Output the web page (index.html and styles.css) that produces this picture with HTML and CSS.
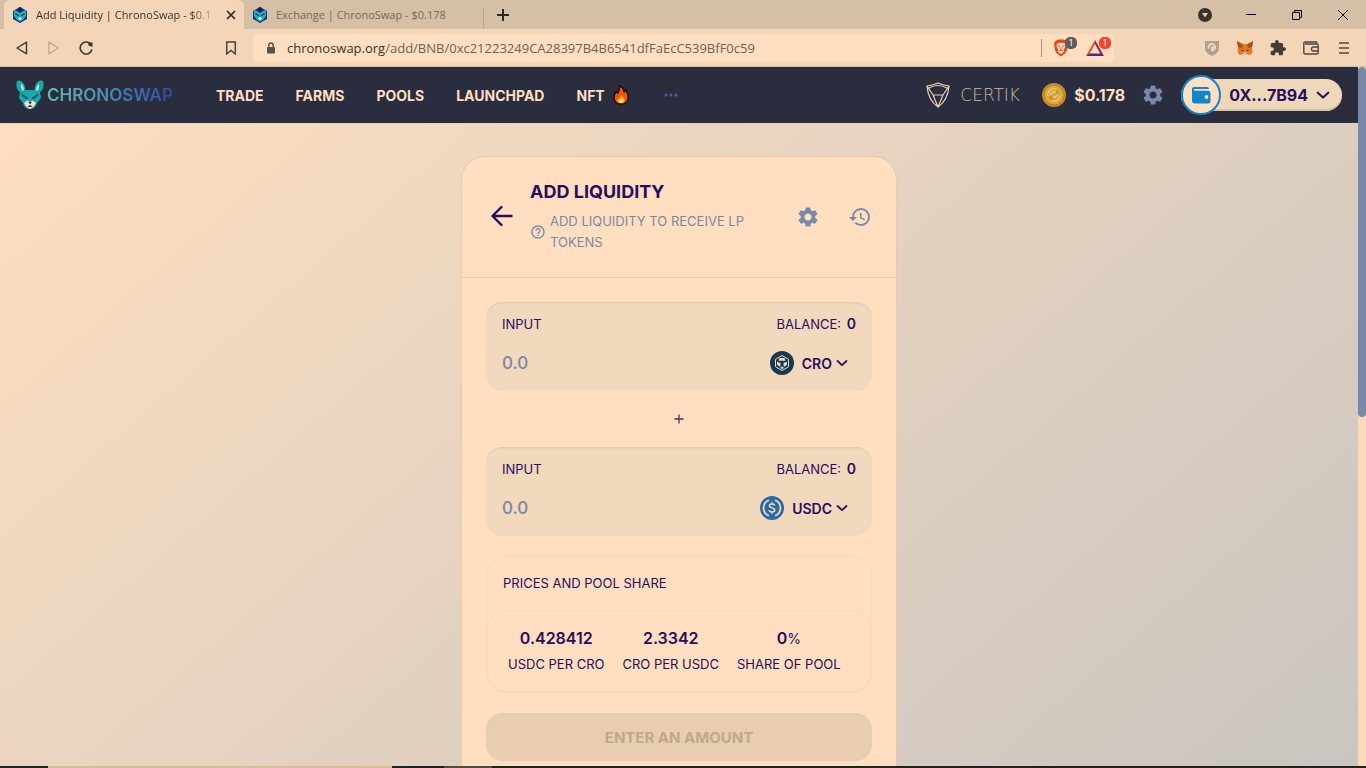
FILE: index.html
```html
<!DOCTYPE html>
<html lang="en">
<head>
<meta charset="utf-8">
<title>Add Liquidity | ChronoSwap</title>
<link rel="stylesheet" href="styles.css">
</head>
<body>
<svg class="defs" aria-hidden="true">
  <symbol id="favicon" viewBox="0 0 16 16">
    <path d="M8 0l7 4v8l-7 4-7-4V4z" fill="#1b2a86"/>
    <path d="M2 3l3 1 3 2 3-2 3-1v6l-3 4-3 1.500-3-1.500-3-4z" fill="#21b3b8"/>
    <circle cx="8" cy="2.500" r="2.300" fill="#12206b"/>
    <path d="M3.500 6.500L7 9M12.500 6.500L9 9" stroke="#123a6b" stroke-width="1.300"/>
    <path d="M6 11.500l2-1.500 2 1.500-2 1.800z" fill="#e9f4ee"/>
  </symbol>
  <symbol id="gear" viewBox="0 0 24 24">
    <path d="M19.14 12.94c.04-.3.06-.61.06-.94 0-.32-.02-.64-.07-.94l2.030-1.580c.18-.14.23-.41.12-.61l-1.920-3.320c-.12-.22-.37-.29-.59-.22l-2.390.96c-.5-.38-1.030-.7-1.620-.94l-.36-2.540c-.04-.24-.24-.41-.48-.41h-3.840c-.24 0-.43.17-.47.41l-.36 2.540c-.59.24-1.130.57-1.620.94l-2.390-.96c-.22-.08-.47 0-.59.22L2.740 8.870c-.12.21-.08.47.12.61l2.030 1.580c-.05.3-.09.63-.09.94s.02.64.07.94l-2.030 1.580c-.18.14-.23.41-.12.61l1.920 3.320c.12.22.37.29.59.22l2.390-.96c.5.38 1.030.7 1.620.94l.36 2.540c.05.24.24.41.48.41h3.840c.24 0 .44-.17.47-.41l.36-2.540c.59-.24 1.130-.56 1.620-.94l2.390.96c.22.08.47 0 .59-.22l1.920-3.320c.12-.22.07-.47-.12-.61l-2.010-1.580zM12 15.600c-1.980 0-3.600-1.620-3.600-3.600s1.620-3.600 3.600-3.600 3.600 1.620 3.600 3.600-1.620 3.600-3.600 3.600z" fill="currentColor"/>
  </symbol>
  <symbol id="chevron" viewBox="0 0 12 12">
    <path d="M1.500 4L6 8.200 10.500 4" fill="none" stroke="currentColor" stroke-width="1.800" stroke-linecap="round" stroke-linejoin="round"/>
  </symbol>
</svg>

<div class="window">
  <div class="tabstrip">
    <div class="tab tab-active">
      <svg class="i16"><use href="#favicon"/></svg>
      <span class="tab-title tab-fade">Add Liquidity | ChronoSwap - $0.1</span>
      <button class="plain" aria-label="Close tab"><svg class="i10" viewBox="0 0 10 10"><path d="M1 1l8 8M9 1L1 9" stroke="#2d2823" stroke-width="1.700"/></svg></button>
    </div>
    <div class="tab tab-idle">
      <svg class="i16"><use href="#favicon"/></svg>
      <span class="tab-title">Exchange | ChronoSwap - $0.178</span>
    </div>
    <button class="plain newtab" aria-label="New tab"><svg class="i12" viewBox="0 0 12 12"><path d="M6 0v12M0 6h12" stroke="#2d2823" stroke-width="2"/></svg></button>
    <div class="winctl">
      <button class="plain" aria-label="Search tabs"><svg class="i14" viewBox="0 0 14 14"><circle cx="7" cy="7" r="7" fill="#3a332c"/><path d="M4 5h6L7 9.500z" fill="#e6cfb4"/></svg></button>
      <button class="plain" aria-label="Minimize"><svg class="i10" viewBox="0 0 10 10"><path d="M0 4.500h10" stroke="#000"/></svg></button>
      <button class="plain" aria-label="Restore"><svg class="i10" viewBox="0 0 10 10"><path d="M.5 2.500h7v7h-7zM2.500 2.500v-2h7v7h-2" fill="none" stroke="#000"/></svg></button>
      <button class="plain" aria-label="Close"><svg class="i10" viewBox="0 0 10 10"><path d="M0 0l10 10M10 0L0 10" stroke="#000"/></svg></button>
    </div>
  </div>

  <div class="toolbar">
    <div class="navbtns">
      <button class="plain" aria-label="Back"><svg class="i14" viewBox="0 0 14 14"><path d="M11.500 1.200v11.600L2 7z" fill="none" stroke="#3f372f" stroke-width="1.400" stroke-linejoin="round"/></svg></button>
      <button class="plain" aria-label="Forward"><svg class="i14" viewBox="0 0 14 14"><path d="M2 1.200v11.600L11.500 7z" fill="none" stroke="#c4a98d" stroke-width="1.400" stroke-linejoin="round"/></svg></button>
      <button class="plain" aria-label="Reload"><svg class="i14" viewBox="0 0 14 14"><path d="M11.500 2.800A6 6 0 1 0 13 8.500" fill="none" stroke="#3f372f" stroke-width="1.600"/><path d="M9 1.500h4.500V6L9.500 4.500z" fill="#3f372f"/></svg></button>
    </div>
    <button class="plain" aria-label="Bookmark"><svg class="i14" viewBox="0 0 14 14"><path d="M2.700 1h8.600v12L7 9.500 2.700 13z" fill="none" stroke="#4b4239" stroke-width="1.500"/></svg></button>
    <div class="address">
      <svg class="lock" viewBox="0 0 10 12"><rect x="1" y="5" width="8" height="6.500" rx="1" fill="#5d5145"/><path d="M2.800 5V3.200a2.200 2.200 0 0 1 4.400 0V5" fill="none" stroke="#5d5145" stroke-width="1.400"/></svg>
      <span class="url"><b>chronoswap.org</b>/add/BNB/0xc21223249CA28397B4B6541dfFaEcC539BfF0c59</span>
      <div class="shields">
        <button class="plain badged" aria-label="Brave Shields"><svg class="i18" viewBox="0 0 18 18"><path d="M3.500 2L6 .5h6L14.500 2l1.500 2-1 7.500-2 3L9 17.500l-4-3-2-3L2 4z" fill="#f0460e"/><path d="M5 4.500l4-.8 4 .8.500 3-2 3.500 1 1.500L9 15l-3.500-2.500 1-1.500-2-3.500z" fill="#ffe6d3"/><path d="M5.500 6.500L8 7.500M12.500 6.500L10 7.500M9 8v3M7 12l2-1 2 1" stroke="#f0460e" fill="none"/></svg><span class="badge">1</span></button>
        <button class="plain badged" aria-label="Rewards"><svg class="i18" viewBox="0 0 18 18"><path d="M9 1L0 17l3.500-2L9 5z" fill="#f0512d"/><path d="M9 1l9 16-3.500-2L9 5z" fill="#8c2157"/><path d="M0 17h18l-3.500-2.500h-11z" fill="#4b2a8a"/></svg><span class="badge badge-red">1</span></button>
      </div>
    </div>
    <div class="extensions">
      <button class="plain" aria-label="Guard"><svg class="i16" viewBox="0 0 16 16"><path d="M1 1h14v7c0 4-3 6-7 8-4-2-7-4-7-8z" fill="#afa08f"/><path d="M4.800 8.500A3.300 3.300 0 1 1 8 10.500V7.500h2" fill="none" stroke="#f3d8bb" stroke-width="1.800"/></svg></button>
      <button class="plain" aria-label="MetaMask"><svg class="i16" viewBox="0 0 16 16"><path d="M0 1l6 3h4l6-3-1 7 .5 4-2 3-4-1H6.500l-4 1-2-3L1 8z" fill="#e8771d"/><path d="M0 1l6 4-1 3-4-1zM16 1l-6 4 1 3 4-1z" fill="#a8501b"/><path d="M3.500 9.500l3 .5-.5 1.500zM12.500 9.500l-3 .5.500 1.500z" fill="#2c3847"/><path d="M6 12h4l-.5 2.500h-3z" fill="#c9b8a5"/></svg></button>
      <button class="plain" aria-label="Extensions"><svg class="i16" viewBox="1 1 22 22"><path d="M20.500 11H19V7c0-1.100-.9-2-2-2h-4V3.500a2.500 2.500 0 0 0-5 0V5H4c-1.100 0-1.990.9-1.990 2v3.800H3.500c1.490 0 2.700 1.210 2.700 2.700s-1.210 2.700-2.700 2.700H2V20c0 1.100.9 2 2 2h3.800v-1.500c0-1.490 1.210-2.700 2.700-2.700s2.700 1.210 2.700 2.700V22H17c1.100 0 2-.9 2-2v-4h1.500a2.500 2.500 0 0 0 0-5z" fill="#453c33"/></svg></button>
      <button class="plain" aria-label="Wallet"><svg class="i16" viewBox="0 0 16 16"><path d="M13.500 4V2H2Q.8 2 .8 3.500V12.500Q.8 14 2.300 14h11.500q1.400 0 1.400-1.400V5.500Q15.200 4 13.700 4H2M15 7h-4.500a2 2 0 0 0 0 4H15" fill="none" stroke="#51463c" stroke-width="1.400"/></svg></button>
      <button class="plain" aria-label="Menu"><svg class="i16" viewBox="0 0 16 16"><path d="M3 3h10M3 8h10M3 13h10" stroke="#51463c" stroke-width="1.600"/></svg></button>
    </div>
  </div>

  <div class="viewport">
    <div class="page">
      <header class="site">
        <a class="brand" href="#">
          <svg class="rabbit" viewBox="0 0 28 30"><path d="M1 1c4-2 8 2 8.500 9h9C19 3 23-1 27 1c1.500 4 0 10-3 11l1 6-4 5c-1 4-4 6-7 6s-6-2-7-6l-4-5 1-6C1 11-.5 5 1 1z" fill="#18a9ad"/><path d="M5 4c2 1 3 3.500 3 6l-1.500 1C5.500 9 4.500 7 5 4zM23 4c-2 1-3 3.500-3 6l1.500 1c1-2 2-4 1.500-7z" fill="#cfe0d2"/><path d="M5 13l7.500 5-2 1.500-4-3zM23 13l-7.500 5 2 1.500 4-3z" fill="#14545f"/><path d="M8 23l3.500-2.500L14 22l2.500-1.500L20 23l-2.500 4-3.500 2-3.500-2z" fill="#ffdfc4"/><path d="M12.500 22h3L14 24zM11.500 27l2.500-2 2.500 2" fill="#22404f" stroke="#22404f" stroke-width=".5"/></svg>
          <span class="wordmark">CHRONOSWAP</span>
        </a>
        <nav class="menu">
          <a href="#">TRADE</a><a href="#">FARMS</a><a href="#">POOLS</a><a href="#">LAUNCHPAD</a>
          <a href="#" class="nft">NFT <svg class="flame" viewBox="0 0 16 20"><path d="M6 1c4 1 5 4 5 6l1.500-2C15 8 15.500 11 15 14c-.5 3-3 5-7 5s-7-2-7-6c0-3 1-4 1.500-6L5 8c1-2 2-4 1-7z" fill="#f4520b" stroke="#160e0c" stroke-width="1.400" stroke-linejoin="round"/><path d="M8 10c2 2 3.500 3.500 3.500 5.300s-1.300 3-3.500 3-3.500-1.300-3.500-3.300l1.500-2 1 1z" fill="#ffb80e"/><path d="M8.500 14l1.500 2.500-2 1.500-2-1.500z" fill="#fff0a0"/></svg></a>
          <a href="#" aria-label="More"><svg class="dots" viewBox="0 0 14 4"><g fill="#4a62ad"><circle cx="2" cy="2" r="1.500"/><circle cx="7" cy="2" r="1.500"/><circle cx="12" cy="2" r="1.500"/></g></svg></a>
        </nav>
        <div class="account">
          <a class="certik" href="#"><svg class="shield" viewBox="0 0 24 26"><path d="M1 4Q8 3 12 1q4 2 11 3-1 14-11 21Q2 18 1 4zM1 4l6 9h10l6-9M7 13l5 12 5-12M3 6Q12 1 21 6" fill="none" stroke="#ead0b7" stroke-width="1.200"/></svg><span>CERTIK</span></a>
          <a class="price" href="#"><svg class="i24" viewBox="0 0 24 24"><circle cx="12" cy="12" r="12" fill="#c98f27"/><circle cx="12" cy="12" r="10" fill="#dba63d" stroke="#a97118" stroke-width=".7"/><path d="M5.500 13a7 7 0 0 1 9-7M18.500 12a7 7 0 0 1-9 6M8 12q2-4 6-3M11 14q3 1 5-3" stroke="#efcc76" stroke-width="1.200" fill="none"/><path d="M14 8l2 1-1 2M9 13l-1 2 3 1" stroke="#ad7a20" fill="none"/></svg>$0.178</a>
          <button class="plain slate" aria-label="Settings"><svg class="i24"><use href="#gear"/></svg></button>
          <button class="wallet"><span class="wallet-icon"><svg class="i24" viewBox="0 0 24 24"><path d="M5 4h13q2 0 2 2H5.500a1 1 0 0 0 0 1.800H19q2.500 0 2.500 2.200v8q0 2.500-2.500 2.500H6q-3 0-3-3V6q0-2 2-2z" fill="#1185c7"/><circle cx="17.500" cy="14" r="1.900" fill="#ffdfc0"/></svg></span><span>0X...7B94</span><svg class="i14"><use href="#chevron"/></svg></button>
        </div>
      </header>

      <main class="content">
        <section class="card">
          <div class="card-head">
            <button class="plain back" aria-label="Go back"><svg class="i24" viewBox="0 0 24 24"><path d="M21.500 11H3M11.500 2L2.500 11l9 9" fill="none" stroke="currentColor" stroke-width="2.400" stroke-linecap="round" stroke-linejoin="round"/></svg></button>
            <div class="heading">
              <h1>ADD LIQUIDITY</h1>
              <div class="sub"><svg class="i16" viewBox="0 0 24 24"><path d="M11 18h2v-2h-2v2zm1-16C6.480 2 2 6.480 2 12s4.480 10 10 10 10-4.480 10-10S17.520 2 12 2zm0 18c-4.410 0-8-3.590-8-8s3.590-8 8-8 8 3.590 8 8-3.590 8-8 8zm0-14c-2.210 0-4 1.790-4 4h2c0-1.100.9-2 2-2s2 .9 2 2c0 2-3 1.750-3 5h2c0-2.250 3-2.500 3-5 0-2.210-1.790-4-4-4z" fill="currentColor"/></svg><p>ADD LIQUIDITY TO RECEIVE LP TOKENS</p></div>
            </div>
            <div class="tools">
              <button class="plain slate" aria-label="Settings"><svg class="i24"><use href="#gear"/></svg></button>
              <button class="plain slate" aria-label="History"><svg class="i24" viewBox="0 0 24 24"><path d="M13 3a9 9 0 0 0-9 9H1l3.890 3.890.07.14L9 12H6c0-3.870 3.130-7 7-7s7 3.130 7 7-3.130 7-7 7c-1.930 0-3.680-.79-4.940-2.060l-1.420 1.420A8.954 8.954 0 0 0 13 21a9 9 0 0 0 0-18zm-1 5v5l4.280 2.540.72-1.210-3.500-2.080V8H12z" fill="currentColor"/></svg></button>
            </div>
          </div>

          <div class="card-body">
            <div class="amount">
              <div class="row"><label for="a0">INPUT</label><span>BALANCE: <b>0</b></span></div>
              <div class="row row-value"><input id="a0" type="text" placeholder="0.0">
                <button class="plain token"><svg class="i24" viewBox="0 0 24 24"><circle cx="12" cy="12" r="12" fill="#163a4f"/><path d="M12 4.500l6.500 3.800v7.400L12 19.500l-6.500-3.800V8.300z" fill="none" stroke="#f3d8bc"/><path d="M9.500 7h5l1 2.700h-7zM7 10.700l3.500 1.300v2.500l-1 1.300L7 13.500zM17 10.700L13.500 12v2.500l1 1.300L17 13.500zM10.500 15.800h3v1.400L12 18l-1.500-.8z" fill="#f3d8bc"/></svg><span>CRO</span><svg class="i12"><use href="#chevron"/></svg></button></div>
            </div>
            <div class="plus"><svg class="i10" viewBox="0 0 10 10"><path d="M5 .5v9M.5 5h9" stroke="#4d2e5c" stroke-width="1.300"/></svg></div>
            <div class="amount">
              <div class="row"><label for="a1">INPUT</label><span>BALANCE: <b>0</b></span></div>
              <div class="row row-value"><input id="a1" type="text" placeholder="0.0">
                <button class="plain token"><svg class="i24" viewBox="0 0 24 24"><circle cx="12" cy="12" r="12" fill="#2b6ba3"/><path d="M9 4.200a8.300 8.300 0 0 0 0 15.600M15 4.200a8.300 8.300 0 0 1 0 15.600" fill="none" stroke="#f3d8bc" stroke-width="1.700"/><path d="M14.700 9.700c-.2-1.200-1.200-1.800-2.700-1.800s-2.600.7-2.600 1.900c0 2.800 5.300 1.300 5.300 4.200 0 1.300-1.100 2-2.700 2s-2.700-.7-2.800-2M12 6.200v1.700M12 16v1.800" fill="none" stroke="#f3d8bc" stroke-width="1.500"/></svg><span>USDC</span><svg class="i12"><use href="#chevron"/></svg></button></div>
            </div>

            <div class="pool">
              <h2>PRICES AND POOL SHARE</h2>
              <div class="stats">
                <div class="stat"><strong>0.428412</strong><span>USDC PER CRO</span></div>
                <div class="stat"><strong>2.3342</strong><span>CRO PER USDC</span></div>
                <div class="stat"><strong>0<small>%</small></strong><span>SHARE OF POOL</span></div>
              </div>
            </div>
            <button class="submit" disabled>ENTER AN AMOUNT</button>
          </div>
        </section>
      </main>
    </div>
    <div class="scrollbar"><div class="thumb"></div></div>
  </div>
  <div class="taskbar"></div>
</div>
</body>
</html>
```
FILE: styles.css
```css
* { box-sizing: border-box; }
body { margin: 0; font-family: Inter, "Liberation Sans", sans-serif; color: #280d5f; }
h1, h2, p { margin: 0; }
a { color: inherit; text-decoration: none; }
button { font-family: inherit; color: inherit; }
svg { display: block; flex: none; }
.defs { position: absolute; width: 0; height: 0; }
.plain { display: flex; align-items: center; padding: 0; border: 0; background: none; }
.i10 { width: 10px; height: 10px; }
.i12 { width: 12px; height: 12px; }
.i14 { width: 14px; height: 14px; }
.i16 { width: 16px; height: 16px; }
.i18 { width: 18px; height: 18px; }
.i24 { width: 24px; height: 24px; }

.window { display: flex; flex-direction: column; height: 100vh; overflow: hidden; }

/* Browser chrome */
.tabstrip { display: flex; flex: none; height: 29px; padding-left: 4px; background: #d6bfa7; font: 11px "Open Sans", "Noto Sans", sans-serif; }
.tab { display: flex; align-items: center; gap: 8px; width: 240px; padding: 0 8px; }
.tab-active { background: #f3d6b8; color: #3a322a; border-radius: 6px 6px 0 0; }
.tab-idle { color: #796958; background: linear-gradient(#bba68f, #bba68f) right 7px / 1px 22px no-repeat; }
.tab-title { flex: 1; white-space: nowrap; }
.tab-fade { -webkit-mask-image: linear-gradient(to right, #000 85%, transparent); mask-image: linear-gradient(to right, #000 85%, transparent); }
.newtab { margin-left: 13px; }
.winctl { display: flex; gap: 36px; margin-left: auto; padding-right: 18px; }
.winctl .plain { justify-content: center; width: 10px; }
.toolbar { display: flex; flex: none; align-items: center; height: 38px; padding: 0 14px; background: #f3d6b8; border-bottom: 1px solid #d9bfa3; }
.navbtns { display: flex; gap: 18px; width: 210px; padding-left: 1px; }
.address { display: flex; flex: 1; align-items: center; height: 28px; margin-left: 15px; padding: 0 2px 0 13px; background: #ffdfc0; border-radius: 4px; font: 13px "Open Sans", "Noto Sans", sans-serif; color: #706152; }
.address b { font-weight: 400; color: #3a322a; }
.lock { width: 10px; height: 12px; margin-right: 11px; }
.url { flex: 1; white-space: nowrap; overflow: hidden; }
.shields { display: flex; gap: 16px; padding-left: 10px; border-left: 1px solid #ab9580; }
.badged { position: relative; width: 18px; }
.shields .badged:last-child { margin-right: 8px; }
.badge { position: absolute; left: 13px; top: -2px; width: 12px; height: 12px; border-radius: 5px; background: #625b5b; color: #fff; font: 9px/12px Roboto, sans-serif; text-align: center; }
.badge-red { background: #f4442b; }
.extensions { display: flex; gap: 17px; margin-left: 90px; }

/* Web page */
.viewport { display: flex; flex: 1; min-height: 0; background: #fbdabc; }
.page { display: flex; flex-direction: column; flex: 1; min-width: 0; overflow: hidden; background: linear-gradient(139deg, #ffdfc0, #c9c5c0); }
.scrollbar { width: 8px; }
.thumb { height: 50%; background: #7a88a8; border-radius: 4px; }
.taskbar { flex: none; height: 2px; background: linear-gradient(to right, #222 48px, #d9bb9c 48px, #d9bb9c 392px, #222 392px, #222 444px, #554a40 444px, #554a40 492px, #222 492px); }

.site { display: flex; flex: none; align-items: center; height: 56px; padding: 0 16px; background: #2a2d3d; color: #ffdfc0; box-shadow: 0 1px 0 #ead3ba; font-weight: 700; }
.brand { display: flex; align-items: center; gap: 3px; width: 200px; }
.rabbit { width: 28px; height: 30px; }
.wordmark { font-size: 17px; font-weight: 600; background: linear-gradient(to right, #63bdb0, #4786b5 55%, #34479a); -webkit-background-clip: text; background-clip: text; color: transparent; }
.menu { display: flex; align-items: center; gap: 32px; font-size: 14px; }
.nft { display: flex; align-items: center; gap: 8px; }
.flame { width: 16px; height: 20px; }
.dots { width: 14px; height: 4px; margin-left: 3px; }
.account { display: flex; align-items: center; gap: 16px; margin-left: auto; }
.certik { display: flex; align-items: center; gap: 4px; min-width: 100px; font: 200 17px "DejaVu Sans", sans-serif; color: #cbb6a4; }
.certik span { flex: 1; text-align: center; }
.shield { width: 24px; height: 26px; }
.price { display: flex; align-items: center; gap: 8px; font-size: 16px; }
.slate { color: #7a88a8; }
.wallet { display: flex; align-items: center; gap: 8px; height: 32px; padding: 0 12px 0 0; border: 0; border-radius: 16px; background: #efd8b9; box-shadow: inset 0 -2px 0 #d6c2a7; color: #280d5f; font-size: 16px; font-weight: 700; }
.wallet-icon { display: flex; align-items: center; justify-content: center; width: 40px; height: 40px; border: 2px solid #1185c7; border-radius: 50%; background: #fddfc4; }

.content { display: flex; justify-content: center; padding: 33px 16px 0; }
.card { width: 100%; max-width: 436px; border: 1px solid #e6cbb2; border-radius: 24px; background: #ffdfc0; }
.card-head { display: flex; align-items: center; padding: 24px; border-bottom: 1px solid #e6cbb2; }
.back { padding: 4px; }
.heading { flex: 1; margin-left: 12px; }
.heading h1 { font-size: 18px; line-height: 22px; font-weight: 700; }
.sub { display: flex; align-items: center; gap: 4px; margin-top: 8px; color: #7a88a8; font-size: 13px; line-height: 21px; }
.sub p { max-width: 200px; }
.tools { display: flex; gap: 28px; margin-left: auto; }
.card-body { padding: 24px; font-size: 13px; }
.amount { height: 89px; padding: 11px 16px 0; border-radius: 16px; background: #f2d8bc; box-shadow: inset 0 2px 2px -1px #dfc5ad; }
.row { display: flex; align-items: center; justify-content: space-between; height: 21px; }
.row b { font-size: 14px; font-weight: 600; margin-left: 2px; }
.row-value { height: 34px; margin-top: 12px; padding-right: 8px; }
.row-value input { flex: 1; min-width: 0; padding: 0; border: 0; outline: 0; background: none; font: 500 17px Inter, sans-serif; color: #280d5f; }
.row-value input::placeholder { color: #7a88a8; opacity: 1; }
.token { gap: 8px; font-size: 14px; font-weight: 600; }
.token .i12 { margin-left: -4px; }
.plus { display: flex; align-items: center; justify-content: center; height: 56px; }
.pool { margin-top: 20px; border: 1px solid #fad9bb; border-radius: 20px; }
.pool h2 { padding: 16px; font-size: 13px; line-height: 21px; font-weight: 400; }
.stats { display: flex; gap: 18px; padding: 15px 20px 16px; border: 1px solid #fad9bb; border-radius: 20px; }
.stat { display: flex; flex-direction: column; align-items: center; white-space: nowrap; }
.stat strong { font-size: 16px; line-height: 24px; font-weight: 600; }
.stat small { font-size: 14px; line-height: 1; font-weight: 400; }
.stat span { margin-top: 4px; line-height: 21px; }
.submit { display: block; width: 100%; height: 48px; margin-top: 20px; border: 0; border-radius: 16px; background: #e9cdb0; color: #bca98f; font-size: 15px; font-weight: 700; }
```
